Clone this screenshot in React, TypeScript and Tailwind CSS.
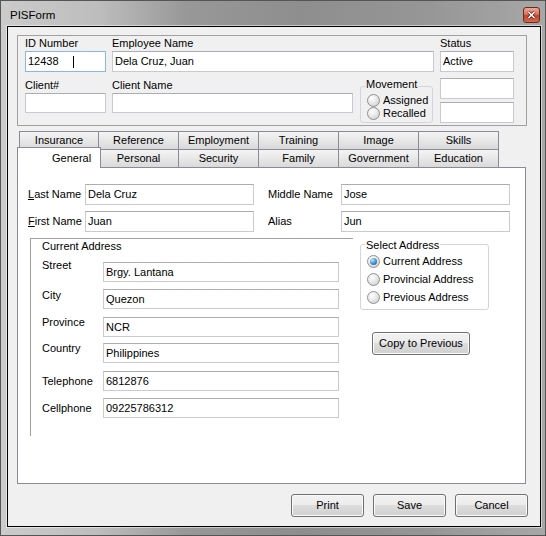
import React from "react";

function TextBox({
  className,
  value,
  focused,
  caret,
}: {
  className: string;
  value?: string;
  focused?: boolean;
  caret?: boolean;
}) {
  return (
    <div
      className={`${className} flex items-center bg-white border pl-[2px] whitespace-nowrap overflow-hidden ${
        focused ? "border-[#8ab8e6]" : "border-[#c6cad2] border-t-[#abadb3]"
      }`}
    >
      {value}
      {caret && <span className="ml-[14px] w-px h-[12px] bg-black" />}
    </div>
  );
}

function Radio({ label, checked }: { label: string; checked?: boolean }) {
  return (
    <div className="flex items-center h-[13px] gap-[3px]">
      <span className="w-[13px] h-[13px] shrink-0 rounded-full border border-[#8e8f8f] bg-[radial-gradient(circle_at_35%_30%,#ffffff_0%,#ececec_40%,#c8c8c8_100%)] flex items-center justify-center">
        {checked && (
          <span className="w-[7px] h-[7px] rounded-full bg-[radial-gradient(circle_at_35%_30%,#bfe6fc_0%,#3b8fd0_55%,#194f8a_100%)]" />
        )}
      </span>
      <span className="whitespace-nowrap">{label}</span>
    </div>
  );
}

function WinButton({
  className,
  children,
}: {
  className: string;
  children: React.ReactNode;
}) {
  return (
    <button
      type="button"
      className={`${className} flex items-center justify-center rounded-[3px] border border-[#707070] bg-[linear-gradient(to_bottom,#f2f2f2_0%,#ebebeb_50%,#dddddd_50%,#cfcfcf_100%)] shadow-[inset_0_0_0_1px_#fbfbfb] text-[11px] leading-[13px]`}
    >
      {children}
    </button>
  );
}

function Tab({ label, first }: { label: string; first?: boolean }) {
  return (
    <div
      className={`w-[80px] h-[18px] flex items-center justify-center border-t border-r border-[#898c95] bg-[linear-gradient(to_bottom,#f4f4f4,#dadada)] ${
        first ? "border-l" : ""
      }`}
    >
      {label}
    </div>
  );
}

const topTabs = ["Insurance", "Reference", "Employment", "Training", "Image", "Skills"];
const bottomTabs = ["Personal", "Security", "Family", "Government", "Education"];

export default function App() {
  return (
    <div className="w-[546px] h-[536px] flex flex-col border border-[#555] pl-[6px] pr-[4px] pb-[8px] bg-[linear-gradient(to_right,#cbcbcb_0%,#bdbdbd_18%,#989898_34%,#8e8e8e_55%,#969696_78%,#a7a7a7_100%)] font-['Liberation_Sans',Arial,sans-serif] text-[11px] leading-[13px] text-black">
      {/* title bar */}
      <div className="h-[25px] flex items-start justify-between pt-[6px] pl-[3px] pr-[1px]">
        <span className="mt-[1px] text-[11.5px] leading-[14px]">PISForm</span>
        <div className="w-[17px] h-[16px] rounded-[3px] border border-[#6b2b22] bg-[linear-gradient(to_bottom,#e9a899_0%,#d8735e_45%,#c2432c_55%,#cf6a4f_100%)] flex items-center justify-center">
          <svg width="9" height="8" viewBox="0 0 9 8">
            <path d="M1.5 1 L7.5 7 M7.5 1 L1.5 7" stroke="#5a1a10" strokeWidth="3" />
            <path d="M1.5 1 L7.5 7 M7.5 1 L1.5 7" stroke="#ffffff" strokeWidth="1.6" />
          </svg>
        </div>
      </div>

      {/* client area */}
      <div className="w-[534px] h-[501px] border border-black bg-[#f0f0f0] shadow-[0_0_0_1px_rgba(255,255,255,0.5)] flex flex-col">
        {/* header panel */}
        <div className="mt-[8px] ml-[9px] w-[510px] h-[91px] border border-[#a0a0a0] flex pl-[7px] pt-[1px]">
          <div className="w-[81px] flex flex-col">
            <span>ID Number</span>
            <TextBox className="mt-[1px] w-[81px] h-[21px]" value="12438" focused caret />
            <span className="mt-[7px]">Client#</span>
            <TextBox className="mt-[1px] w-[81px] h-[20px]" />
          </div>
          <div className="ml-[6px] w-[322px] flex flex-col">
            <span>Employee Name</span>
            <TextBox className="mt-[1px] w-[322px] h-[21px]" value="Dela Cruz, Juan" />
            <div className="flex items-start">
              <div className="w-[241px] flex flex-col">
                <span className="mt-[7px]">Client Name</span>
                <TextBox className="mt-[1px] w-[241px] h-[20px]" />
              </div>
              <div className="relative ml-[7px] mt-[6px] w-[73px] pt-[8px]">
                <div className="h-[37px] rounded-[3px] border border-[#d0d6db] pl-[6px] pt-[7px] flex flex-col">
                  <Radio label="Assigned" />
                  <Radio label="Recalled" />
                </div>
                <span className="absolute left-[5px] top-0 px-[1px] bg-[#f0f0f0]">Movement</span>
              </div>
            </div>
          </div>
          <div className="ml-[6px] w-[74px] flex flex-col">
            <span>Status</span>
            <TextBox className="mt-[1px] w-[74px] h-[21px]" value="Active" />
            <TextBox className="mt-[6px] w-[74px] h-[21px]" />
            <TextBox className="mt-[3px] w-[74px] h-[21px]" />
          </div>
        </div>

        {/* tab control */}
        <div className="mt-[5px] ml-[9px] w-[509px] flex flex-col">
          <div className="flex h-[18px] pl-[2px]">
            {topTabs.map((t, i) => (
              <Tab key={t} label={t} first={i === 0} />
            ))}
          </div>
          <div className="flex h-[18px] items-end">
            <div className="relative z-10 w-[84px] h-[21px] -mb-px -mr-[2px] border-l border-t border-r border-[#898c95] bg-white pl-[34px] pt-[4px]">
              General
            </div>
            {bottomTabs.map((t) => (
              <Tab key={t} label={t} />
            ))}
          </div>
          <div className="w-[509px] h-[317px] border border-[#898c95] bg-white pl-[10px] pt-[16px] flex flex-col">
            <div className="flex items-center h-[21px]">
              <span className="w-[57px]">
                <u>L</u>ast Name
              </span>
              <TextBox className="w-[169px] h-[21px]" value="Dela Cruz" />
              <span className="ml-[14px] w-[73px]">Middle Name</span>
              <TextBox className="w-[169px] h-[21px]" value="Jose" />
            </div>
            <div className="mt-[6px] flex items-center h-[21px]">
              <span className="w-[57px]">
                <u>F</u>irst Name
              </span>
              <TextBox className="w-[169px] h-[21px]" value="Juan" />
              <span className="ml-[14px] w-[73px]">Alias</span>
              <TextBox className="w-[169px] h-[21px]" value="Jun" />
            </div>

            <div className="mt-[6px] ml-[2px] flex items-start">
              {/* current address */}
              <div className="w-[323px] h-[198px] border-t border-l border-[#a0a0a0] pl-[11px] pt-[1px] flex flex-col">
                <span>Current Address</span>
                <div className="mt-[9px] flex items-start">
                  <span className="w-[61px] -mt-[3px]">Street</span>
                  <TextBox className="w-[236px] h-[20px]" value="Brgy. Lantana" />
                </div>
                <div className="mt-[7px] flex items-start">
                  <span className="w-[61px]">City</span>
                  <TextBox className="w-[236px] h-[20px]" value="Quezon" />
                </div>
                <div className="mt-[8px] flex items-start">
                  <span className="w-[61px] -mt-[1px]">Province</span>
                  <TextBox className="w-[236px] h-[20px]" value="NCR" />
                </div>
                <div className="mt-[6px] flex items-start">
                  <span className="w-[61px] -mt-[1px]">Country</span>
                  <TextBox className="w-[236px] h-[20px]" value="Philippines" />
                </div>
                <div className="mt-[8px] flex items-start">
                  <span className="w-[61px] mt-[4px]">Telephone</span>
                  <TextBox className="w-[236px] h-[20px]" value="6812876" />
                </div>
                <div className="mt-[7px] flex items-start">
                  <span className="w-[61px] mt-[4px]">Cellphone</span>
                  <TextBox className="w-[236px] h-[20px]" value="09225786312" />
                </div>
              </div>

              {/* select address */}
              <div className="ml-[7px] flex flex-col">
                <div className="relative w-[129px] pt-[6px]">
                  <div className="h-[66px] rounded-[3px] border border-[#d0d6db] pl-[6px] pt-[10px] flex flex-col gap-[5px]">
                    <Radio label="Current Address" checked />
                    <Radio label="Provincial Address" />
                    <Radio label="Previous Address" />
                  </div>
                  <span className="absolute left-[5px] top-[1px] px-[1px] bg-white">Select Address</span>
                </div>
                <WinButton className="mt-[22px] ml-[12px] w-[98px] h-[23px]">Copy to Previous</WinButton>
              </div>
            </div>
          </div>
        </div>

        {/* footer buttons */}
        <div className="mt-[10px] flex justify-end gap-[9px] pr-[12px]">
          <WinButton className="w-[73px] h-[23px]">Print</WinButton>
          <WinButton className="w-[73px] h-[23px]">Save</WinButton>
          <WinButton className="w-[73px] h-[23px]">Cancel</WinButton>
        </div>
      </div>
    </div>
  );
}
